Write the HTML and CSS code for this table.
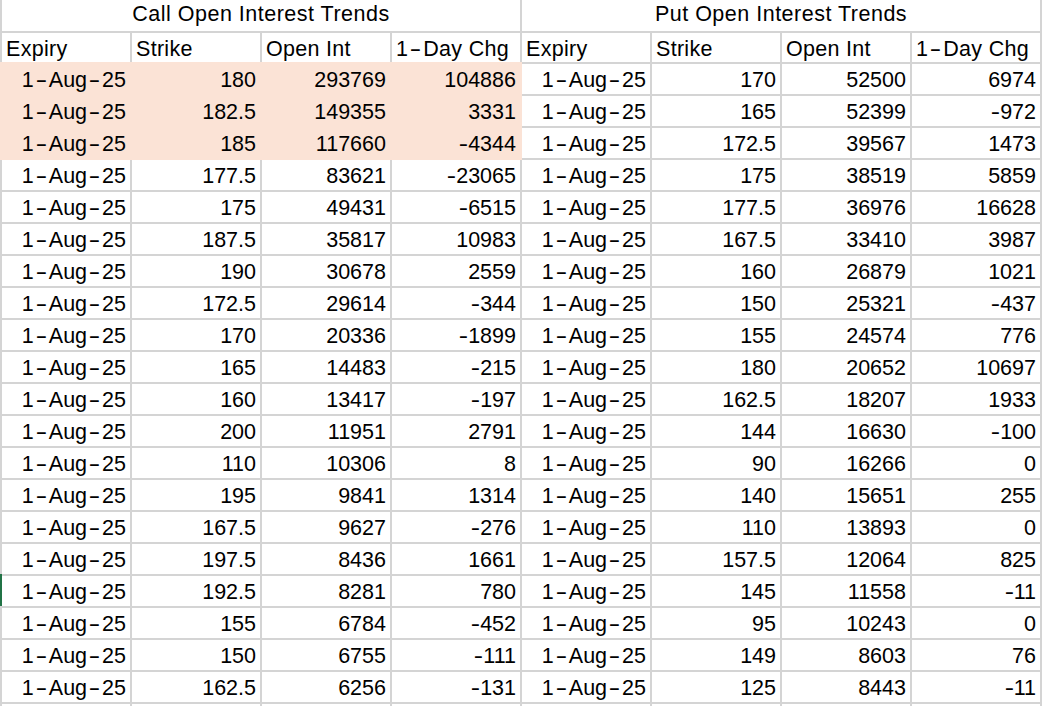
FILE: index.html
```html
<!DOCTYPE html>
<html>
<head>
<meta charset="utf-8">
<link rel="stylesheet" href="styles.css">
</head>
<body>
<div class="sheet">
<div class="c t">Call Open Interest Trends</div><div class="c t">Put Open Interest Trends</div>
<div class="c hd">Expiry</div><div class="c hd">Strike</div><div class="c hd">Open Int</div><div class="c hd">1<span class="h">-</span>Day Chg</div><div class="c hd">Expiry</div><div class="c hd">Strike</div><div class="c hd">Open Int</div><div class="c hd">1<span class="h">-</span>Day Chg</div>

<div class="c n hl">1<span class="h">-</span>Aug<span class="h">-</span>25</div><div class="c n hl">180</div><div class="c n hl">293769</div><div class="c n hl">104886</div><div class="c n">1<span class="h">-</span>Aug<span class="h">-</span>25</div><div class="c n">170</div><div class="c n">52500</div><div class="c n">6974</div>
<div class="c n hl">1<span class="h">-</span>Aug<span class="h">-</span>25</div><div class="c n hl">182.5</div><div class="c n hl">149355</div><div class="c n hl">3331</div><div class="c n">1<span class="h">-</span>Aug<span class="h">-</span>25</div><div class="c n">165</div><div class="c n">52399</div><div class="c n"><span class="m">-</span>972</div>
<div class="c n hl">1<span class="h">-</span>Aug<span class="h">-</span>25</div><div class="c n hl">185</div><div class="c n hl">117660</div><div class="c n hl"><span class="m">-</span>4344</div><div class="c n">1<span class="h">-</span>Aug<span class="h">-</span>25</div><div class="c n">172.5</div><div class="c n">39567</div><div class="c n">1473</div>
<div class="c n">1<span class="h">-</span>Aug<span class="h">-</span>25</div><div class="c n">177.5</div><div class="c n">83621</div><div class="c n"><span class="m">-</span>23065</div><div class="c n">1<span class="h">-</span>Aug<span class="h">-</span>25</div><div class="c n">175</div><div class="c n">38519</div><div class="c n">5859</div>
<div class="c n">1<span class="h">-</span>Aug<span class="h">-</span>25</div><div class="c n">175</div><div class="c n">49431</div><div class="c n"><span class="m">-</span>6515</div><div class="c n">1<span class="h">-</span>Aug<span class="h">-</span>25</div><div class="c n">177.5</div><div class="c n">36976</div><div class="c n">16628</div>
<div class="c n">1<span class="h">-</span>Aug<span class="h">-</span>25</div><div class="c n">187.5</div><div class="c n">35817</div><div class="c n">10983</div><div class="c n">1<span class="h">-</span>Aug<span class="h">-</span>25</div><div class="c n">167.5</div><div class="c n">33410</div><div class="c n">3987</div>
<div class="c n">1<span class="h">-</span>Aug<span class="h">-</span>25</div><div class="c n">190</div><div class="c n">30678</div><div class="c n">2559</div><div class="c n">1<span class="h">-</span>Aug<span class="h">-</span>25</div><div class="c n">160</div><div class="c n">26879</div><div class="c n">1021</div>
<div class="c n">1<span class="h">-</span>Aug<span class="h">-</span>25</div><div class="c n">172.5</div><div class="c n">29614</div><div class="c n"><span class="m">-</span>344</div><div class="c n">1<span class="h">-</span>Aug<span class="h">-</span>25</div><div class="c n">150</div><div class="c n">25321</div><div class="c n"><span class="m">-</span>437</div>
<div class="c n">1<span class="h">-</span>Aug<span class="h">-</span>25</div><div class="c n">170</div><div class="c n">20336</div><div class="c n"><span class="m">-</span>1899</div><div class="c n">1<span class="h">-</span>Aug<span class="h">-</span>25</div><div class="c n">155</div><div class="c n">24574</div><div class="c n">776</div>
<div class="c n">1<span class="h">-</span>Aug<span class="h">-</span>25</div><div class="c n">165</div><div class="c n">14483</div><div class="c n"><span class="m">-</span>215</div><div class="c n">1<span class="h">-</span>Aug<span class="h">-</span>25</div><div class="c n">180</div><div class="c n">20652</div><div class="c n">10697</div>
<div class="c n">1<span class="h">-</span>Aug<span class="h">-</span>25</div><div class="c n">160</div><div class="c n">13417</div><div class="c n"><span class="m">-</span>197</div><div class="c n">1<span class="h">-</span>Aug<span class="h">-</span>25</div><div class="c n">162.5</div><div class="c n">18207</div><div class="c n">1933</div>
<div class="c n">1<span class="h">-</span>Aug<span class="h">-</span>25</div><div class="c n">200</div><div class="c n">11951</div><div class="c n">2791</div><div class="c n">1<span class="h">-</span>Aug<span class="h">-</span>25</div><div class="c n">144</div><div class="c n">16630</div><div class="c n"><span class="m">-</span>100</div>
<div class="c n">1<span class="h">-</span>Aug<span class="h">-</span>25</div><div class="c n">110</div><div class="c n">10306</div><div class="c n">8</div><div class="c n">1<span class="h">-</span>Aug<span class="h">-</span>25</div><div class="c n">90</div><div class="c n">16266</div><div class="c n">0</div>
<div class="c n">1<span class="h">-</span>Aug<span class="h">-</span>25</div><div class="c n">195</div><div class="c n">9841</div><div class="c n">1314</div><div class="c n">1<span class="h">-</span>Aug<span class="h">-</span>25</div><div class="c n">140</div><div class="c n">15651</div><div class="c n">255</div>
<div class="c n">1<span class="h">-</span>Aug<span class="h">-</span>25</div><div class="c n">167.5</div><div class="c n">9627</div><div class="c n"><span class="m">-</span>276</div><div class="c n">1<span class="h">-</span>Aug<span class="h">-</span>25</div><div class="c n">110</div><div class="c n">13893</div><div class="c n">0</div>
<div class="c n">1<span class="h">-</span>Aug<span class="h">-</span>25</div><div class="c n">197.5</div><div class="c n">8436</div><div class="c n">1661</div><div class="c n">1<span class="h">-</span>Aug<span class="h">-</span>25</div><div class="c n">157.5</div><div class="c n">12064</div><div class="c n">825</div>
<div class="c n sel">1<span class="h">-</span>Aug<span class="h">-</span>25</div><div class="c n">192.5</div><div class="c n">8281</div><div class="c n">780</div><div class="c n">1<span class="h">-</span>Aug<span class="h">-</span>25</div><div class="c n">145</div><div class="c n">11558</div><div class="c n"><span class="m">-</span>11</div>
<div class="c n">1<span class="h">-</span>Aug<span class="h">-</span>25</div><div class="c n">155</div><div class="c n">6784</div><div class="c n"><span class="m">-</span>452</div><div class="c n">1<span class="h">-</span>Aug<span class="h">-</span>25</div><div class="c n">95</div><div class="c n">10243</div><div class="c n">0</div>
<div class="c n">1<span class="h">-</span>Aug<span class="h">-</span>25</div><div class="c n">150</div><div class="c n">6755</div><div class="c n"><span class="m">-</span>111</div><div class="c n">1<span class="h">-</span>Aug<span class="h">-</span>25</div><div class="c n">149</div><div class="c n">8603</div><div class="c n">76</div>
<div class="c n">1<span class="h">-</span>Aug<span class="h">-</span>25</div><div class="c n">162.5</div><div class="c n">6256</div><div class="c n"><span class="m">-</span>131</div><div class="c n">1<span class="h">-</span>Aug<span class="h">-</span>25</div><div class="c n">125</div><div class="c n">8443</div><div class="c n"><span class="m">-</span>11</div>
<div class="c"></div><div class="c"></div><div class="c"></div><div class="c"></div><div class="c"></div><div class="c"></div><div class="c"></div><div class="c"></div>
</div>
</body>
</html>
```

FILE: styles.css
```css
html, body {
  margin: 0;
  padding: 0;
  background: #ffffff;
  overflow: hidden;
}

body {
  font-family: "Liberation Sans", Arial, sans-serif;
  font-size: 21.5px;
  color: #000000;
}

.sheet {
  display: grid;
  grid-template-columns: repeat(8, 128px);
  grid-template-rows: 31px 29px;
  grid-auto-rows: 30px;
  gap: 2px;
  padding: 0 2px;
  background: #d4d4d4;
  width: max-content;
}

.c {
  position: relative;
  background: #ffffff;
  line-height: 28px;
  padding: 2px 4px 0 4px;
  white-space: nowrap;
  box-sizing: border-box;
}

.t {
  grid-column: span 4;
  text-align: center;
  padding-top: 0;
  letter-spacing: 0.5px;
}

.hd {
  text-align: left;
  padding-left: 4px;
  letter-spacing: 0.3px;
}

.n {
  text-align: right;
}

.hl {
  background: #fbe3d6;
  box-shadow: 0 0 0 2px #fbe3d6;
}

.h {
  display: inline-block;
  width: 15px;
  text-align: center;
  transform: scaleX(1.65);
  letter-spacing: 0;
}

.m {
  display: inline-block;
  width: 9px;
  text-align: center;
  transform: scaleX(1.3);
}

.sel::before {
  content: "";
  position: absolute;
  left: -2px;
  top: -2px;
  width: 2px;
  height: 32px;
  background: #217346;
}
```
